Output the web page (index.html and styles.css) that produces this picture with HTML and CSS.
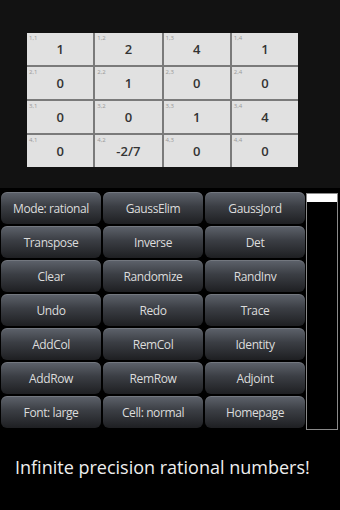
FILE: index.html
```html
<!DOCTYPE html>
<html lang="en">
<head>
    <meta charset="UTF-8">
    <meta name="viewport" content="width=device-width, initial-scale=1.0">
    <title>Matrix Calculator</title>
    <link rel="stylesheet" href="styles.css">
</head>
<body>
<div class="matrix-area">
    <div class="matrix">
        <div class="cell"><span class="idx">1,1</span>1</div>
        <div class="cell"><span class="idx">1,2</span>2</div>
        <div class="cell"><span class="idx">1,3</span>4</div>
        <div class="cell"><span class="idx">1,4</span>1</div>
        <div class="cell"><span class="idx">2,1</span>0</div>
        <div class="cell"><span class="idx">2,2</span>1</div>
        <div class="cell"><span class="idx">2,3</span>0</div>
        <div class="cell"><span class="idx">2,4</span>0</div>
        <div class="cell"><span class="idx">3,1</span>0</div>
        <div class="cell"><span class="idx">3,2</span>0</div>
        <div class="cell"><span class="idx">3,3</span>1</div>
        <div class="cell"><span class="idx">3,4</span>4</div>
        <div class="cell"><span class="idx">4,1</span>0</div>
        <div class="cell"><span class="idx">4,2</span>-2/7</div>
        <div class="cell"><span class="idx">4,3</span>0</div>
        <div class="cell"><span class="idx">4,4</span>0</div>
    </div>
</div>
<div class="controls">
    <div class="buttons">
        <button>Mode: rational</button>
        <button>GaussElim</button>
        <button>GaussJord</button>
        <button>Transpose</button>
        <button>Inverse</button>
        <button>Det</button>
        <button>Clear</button>
        <button>Randomize</button>
        <button>RandInv</button>
        <button>Undo</button>
        <button>Redo</button>
        <button>Trace</button>
        <button>AddCol</button>
        <button>RemCol</button>
        <button>Identity</button>
        <button>AddRow</button>
        <button>RemRow</button>
        <button>Adjoint</button>
        <button>Font: large</button>
        <button>Cell: normal</button>
        <button>Homepage</button>
    </div>
    <div class="scrollbar">
        <div class="thumb"></div>
    </div>
</div>
<p class="caption">Infinite precision rational numbers!</p>
</body>
</html>
```

FILE: styles.css
```css
body {
    margin: 0;
    background-color: #000;
    font-family: "Open Sans", "DejaVu Sans", sans-serif;
}
.matrix-area {
    background-color: #121212;
    height: 155px;
    padding: 33px 0 0 27px;
}
.matrix {
    width: 271px;
    display: grid;
    grid-template-columns: repeat(4, 1fr);
    grid-auto-rows: 32px;
    gap: 2px;
    background: #7a7a7a;
}
.cell {
    position: relative;
    background: #e1e1e1;
    display: flex;
    justify-content: center;
    align-items: center;
    font-size: 13px;
    font-weight: 600;
    color: #333;
}
.idx {
    position: absolute;
    top: 1px;
    left: 2px;
    font-size: 6px;
    font-weight: 400;
    color: #999;
}
.controls {
    display: flex;
    padding: 4px 0 0 1px;
}
.buttons {
    display: grid;
    grid-template-columns: repeat(3, 100px);
    grid-auto-rows: 32px;
    gap: 2px;
}
button {
    font-family: "Open Sans", "DejaVu Sans", sans-serif;
    font-size: 12px;
    letter-spacing: -0.4px;
    color: #dcdcdc;
    background: linear-gradient(#5e636c, #3b3e44 45%, #1e1f22);
    border: none;
    border-radius: 6px;
    padding: 0;
    box-shadow: inset 0 1px 0 rgba(255, 255, 255, 0.14);
}
.scrollbar {
    margin: 1px 0 0 1px;
    width: 30px;
    height: 235px;
    border: 1px solid #8a8a8a;
    background: #000;
}
.thumb {
    height: 8px;
    background: #fff;
}
.caption {
    margin: 25px 0 0 15px;
    font-size: 18px;
    color: #eee;
    font-family: "Open Sans", "DejaVu Sans", sans-serif;
}
```
